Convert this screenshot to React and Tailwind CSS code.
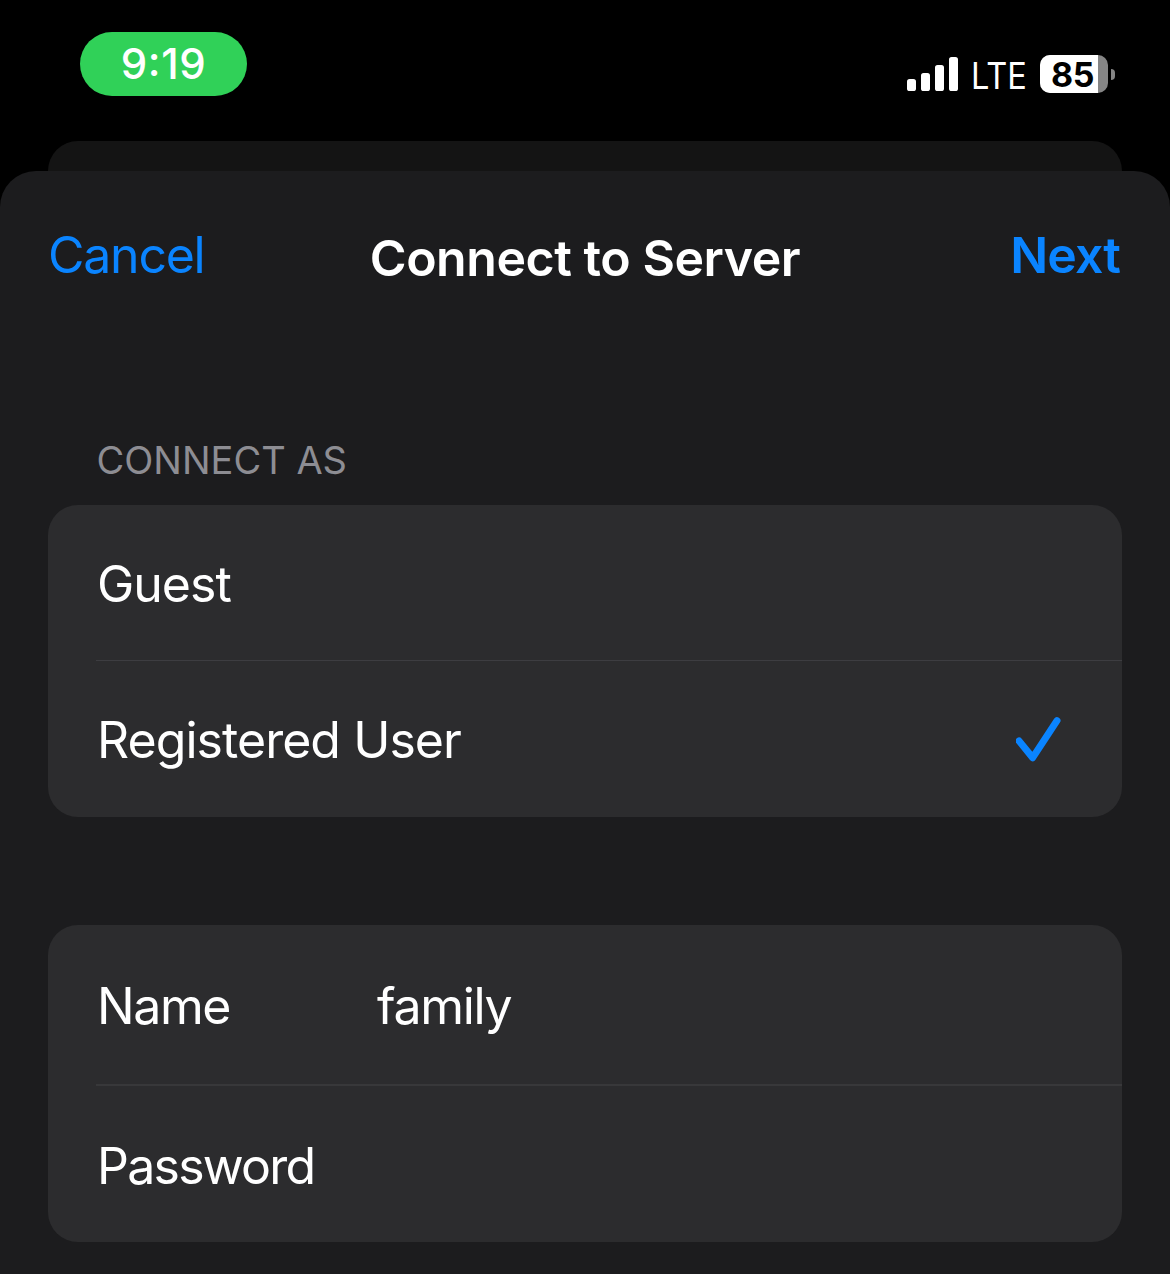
function Row({ className, children }) {
  return <div className={`flex items-center pl-[49px] pr-[60px] ${className}`}>{children}</div>;
}

function StatusBar() {
  return (
    <header className="flex h-[141px] items-start justify-between pl-20 pr-[55px] pt-8 text-white">
      <div className="flex h-16 w-[167px] items-center justify-center rounded-full bg-[#30d158]">
        <span className="text-[42px] leading-none font-medium tracking-[0.6px]">
          9<span className="inline-block -translate-y-[3px]">:</span>19
        </span>
      </div>
      <div className="flex h-[38px] items-center mt-[23px]">
        <svg width="52" height="34" viewBox="0 0 52 34" fill="white">
          <rect x="0" y="22" width="9" height="12" rx="2.6" />
          <rect x="14" y="16" width="9" height="18" rx="2.6" />
          <rect x="28" y="8" width="9" height="26" rx="2.6" />
          <rect x="42" y="0" width="9" height="34" rx="2.6" />
        </svg>
        <span className="ml-[12px] w-[56px] origin-left scale-x-[0.88] pt-[3px] text-[37px] leading-none">LTE</span>
        <div className="ml-[13px] flex h-[38px] w-[68px] items-center overflow-hidden rounded-[10px] bg-[#858585]">
          <span className="flex h-full w-[58px] items-center justify-center bg-white pl-[7px] text-[34px] font-bold tracking-[-0.4px] text-black">85</span>
        </div>
        <span className="ml-[3px] h-[11px] w-1 rounded-r-full bg-[#858585]" />
      </div>
    </header>
  );
}

export default function App() {
  return (
    <div className="h-[1274px] w-[1170px] overflow-hidden bg-black font-['Inter',sans-serif]">
      <StatusBar />
      <div className="mx-12 h-[30px] rounded-t-[30px] bg-[#141414]" />
      <main className="h-[1103px] rounded-t-[36px] bg-[#1c1c1e] px-12 text-[50px] text-white">
        <nav className="grid h-[172px] grid-cols-[1fr_auto_1fr] items-center">
          <span className="pb-[4px] tracking-[-1.25px] text-[#0a84ff]">Cancel</span>
          <h1 className="pt-[3px] font-semibold tracking-[-0.45px]">Connect to Server</h1>
          <span className="pr-[2px] pb-[4px] text-right font-semibold tracking-[-0.9px] text-[#0a84ff]">Next</span>
        </nav>
        <h2 className="flex h-[162px] items-end pb-[16px] pl-[48.5px] text-[38px] text-[#8d8d93]">CONNECT AS</h2>
        <section className="h-[312px] rounded-[30px] bg-[#2c2c2e]">
          <Row className="h-[155px] pt-[4px]">
            <span className="tracking-[-1px]">Guest</span>
          </Row>
          <div className="ml-12 h-px bg-[#3d3d41]" />
          <Row className="h-[156px] justify-between">
            <span className="pt-[3px] tracking-[-0.95px]">Registered User</span>
            <svg width="46" height="46" viewBox="0 0 46 46" fill="none" stroke="#0a84ff" strokeWidth="7" strokeLinecap="round" strokeLinejoin="round">
              <path d="M3 24.9L16.7 41.7L41 4.7" />
            </svg>
          </Row>
        </section>
        <section className="mt-[108px] h-[317px] rounded-[30px] bg-[#2c2c2e]">
          <Row className="h-[159px] pt-[4px]">
            <span className="w-[280px] tracking-[-1.4px]">Name</span>
            <span className="tracking-[-1.3px]">family</span>
          </Row>
          <div className="ml-12 h-[2px] bg-[#38383a]" />
          <Row className="h-[156px] pt-[4px]">
            <span className="tracking-[-1.75px]">Password</span>
          </Row>
        </section>
      </main>
    </div>
  );
}
